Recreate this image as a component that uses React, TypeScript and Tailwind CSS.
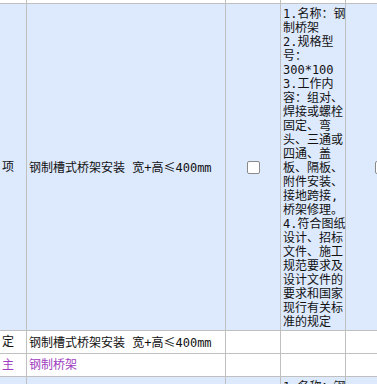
import React from "react";

const desc = [
  "1.名称：钢",
  "制桥架",
  "2.规格型",
  "号：",
  "300*100",
  "3.工作内",
  "容：组对、",
  "焊接或螺栓",
  "固定、弯",
  "头、三通或",
  "四通、盖",
  "板、隔板、",
  "附件安装、",
  "接地跨接,",
  "桥架修理。",
  "4.符合图纸",
  "设计、招标",
  "文件、施工",
  "规范要求及",
  "设计文件的",
  "要求和国家",
  "现行有关标",
  "准的规定",
];

function Box() {
  return <div className="w-[13px] h-[13px] bg-white border border-[#8a8a8a] rounded-[2px]" />;
}

function Name() {
  return (
    <>
      钢制槽式桥架安装 宽+高
      <span style={{ fontFamily: '"Noto Sans CJK SC", sans-serif' }}>≤</span>
      400mm
    </>
  );
}

export default function App() {
  const blue = "bg-[#dde9fd]";
  return (
    <div
      className="w-[377px] h-[384px] overflow-hidden bg-white text-[12px] text-[#111] leading-[14px]"
      style={{ fontFamily: '"DejaVu Sans Mono", "Noto Sans CJK SC", monospace' }}
    >
      <div className="grid grid-cols-[26px_198px_54px_64px_80px] grid-rows-[3px_326px_22px_22px_60px] gap-px bg-[#c0c0c0] w-[426px]">
        {/* row 0 */}
        <div className="bg-white" />
        <div className="bg-white" />
        <div className="bg-white" />
        <div className="bg-white" />
        <div className="bg-white" />
        {/* row 1 */}
        <div className={`${blue} flex items-center pl-[2px]`}>项</div>
        <div className={`${blue} flex items-center pl-[2px] whitespace-nowrap`}>
          <span><Name /></span>
        </div>
        <div className={`${blue} flex items-center justify-center`}>
          <Box />
        </div>
        <div className={`${blue} pl-[2px] pt-[3px] whitespace-nowrap`}>
          {desc.map((l, i) => (
            <div key={i} className="h-[14px]">{l}</div>
          ))}
        </div>
        <div className={`${blue} flex items-center pl-[29px]`}>
          <Box />
        </div>
        {/* row 2 */}
        <div className="bg-white flex items-center pl-[2px]">定</div>
        <div className="bg-white flex items-center pl-[2px] whitespace-nowrap">
          <span><Name /></span>
        </div>
        <div className="bg-white" />
        <div className="bg-white" />
        <div className="bg-white" />
        {/* row 3 */}
        <div className="bg-white flex items-center pl-[2px] text-[#a03cc0]">主</div>
        <div className="bg-white flex items-center pl-[2px] text-[#a03cc0]">钢制桥架</div>
        <div className="bg-white" />
        <div className="bg-white" />
        <div className="bg-white" />
        {/* row 4 */}
        <div className={blue} />
        <div className={blue} />
        <div className={blue} />
        <div className={`${blue} pl-[2px] pt-[3px] whitespace-nowrap`}>
          <div className="h-[14px]">1.名称：钢</div>
        </div>
        <div className={blue} />
      </div>
    </div>
  );
}
